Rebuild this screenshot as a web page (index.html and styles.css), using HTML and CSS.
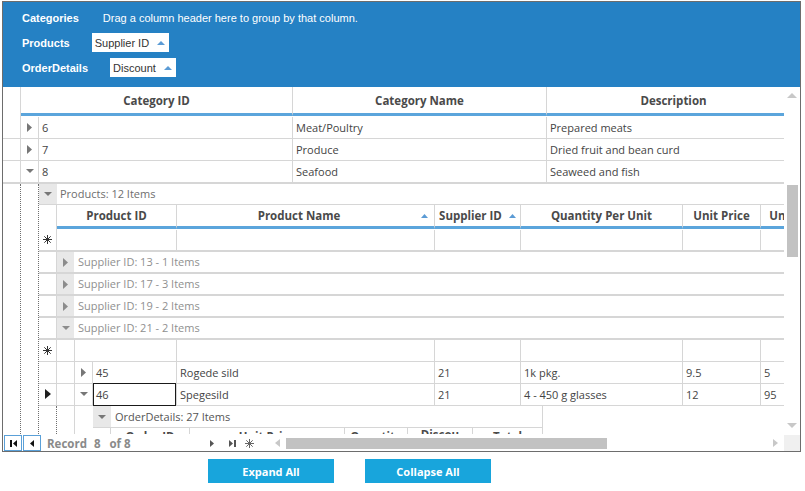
FILE: index.html
```html
<!DOCTYPE html>
<html>
<head>
<meta charset="utf-8">
<link rel="stylesheet" href="styles.css">
</head>
<body>
<div class="grid">
  <div class="group-panel">
    <div class="gp-row"><span class="gp-label">Categories</span><span class="gp-hint">Drag a column header here to group by that column.</span></div>
    <div class="gp-row"><span class="gp-label">Products</span><span class="gp-chip">Supplier ID<svg class="sort" width="8" height="4" viewBox="0 0 8 4"><path d="M0 4L4 0L8 4Z"/></svg></span></div>
    <div class="gp-row"><span class="gp-label">OrderDetails</span><span class="gp-chip">Discount<svg class="sort" width="8" height="4" viewBox="0 0 8 4"><path d="M0 4L4 0L8 4Z"/></svg></span></div>
  </div>

  <div class="main">
    <div class="content">
      <div class="hdr">
        <div class="c col-ind"></div>
        <div class="c hc col-catid-h">Category ID</div>
        <div class="c hc col-254">Category Name</div>
        <div class="c hc col-254">Description</div>
      </div>
      <div class="row">
        <div class="c col-ind"></div>
        <div class="c col-exp mid"><svg width="5" height="9" viewBox="0 0 5 9"><path class="tri" d="M0 0L5 4.5L0 9Z"/></svg></div>
        <div class="c col-254">6</div>
        <div class="c col-254">Meat/Poultry</div>
        <div class="c col-254">Prepared meats</div>
      </div>
      <div class="row">
        <div class="c col-ind"></div>
        <div class="c col-exp mid"><svg width="5" height="9" viewBox="0 0 5 9"><path class="tri" d="M0 0L5 4.5L0 9Z"/></svg></div>
        <div class="c col-254">7</div>
        <div class="c col-254">Produce</div>
        <div class="c col-254">Dried fruit and bean curd</div>
      </div>
      <div class="row row-last">
        <div class="c col-ind"></div>
        <div class="c col-exp mid"><svg width="8" height="4" viewBox="0 0 8 4"><path class="tri" d="M0 0H8L4 4Z"/></svg></div>
        <div class="c col-254">8</div>
        <div class="c col-254">Seafood</div>
        <div class="c col-254">Seaweed and fish</div>
      </div>

      <div class="detail">
        <div class="dots"></div>
        <div class="dots"></div>
        <div class="sub">
          <div class="band">
            <div class="band-btn"><svg width="8" height="4" viewBox="0 0 8 4"><path class="tri" d="M0 0H8L4 4Z"/></svg></div>
            <div class="band-text">Products: 12 Items</div>
          </div>
          <div class="hdr hdr-sub">
            <div class="c col-ind"></div>
            <div class="c hc col-120">Product ID</div>
            <div class="c hc col-258 sorted"><span class="hc-text">Product Name</span><svg class="sort" width="7" height="4" viewBox="0 0 7 4"><path d="M0 4L3.5 0L7 4Z"/></svg></div>
            <div class="c hc col-86 sorted-inline">Supplier ID<svg class="sort" width="7" height="4" viewBox="0 0 7 4"><path d="M0 4L3.5 0L7 4Z"/></svg></div>
            <div class="c hc col-162">Quantity Per Unit</div>
            <div class="c hc col-78">Unit Price</div>
            <div class="c hc col-97">Units In Stock</div>
          </div>
          <div class="row row-thick">
            <div class="c col-ind mid"><svg width="9" height="9" viewBox="0 0 9 9"><path class="star" d="M4.5 0V9M0 4.5H9M1.3 1.3L7.7 7.7M7.7 1.3L1.3 7.7"/></svg></div>
            <div class="c col-120"></div>
            <div class="c col-258"></div>
            <div class="c col-86"></div>
            <div class="c col-162"></div>
            <div class="c col-78"></div>
            <div class="c col-97"></div>
          </div>
          <div class="row grp">
            <div class="c col-ind"></div>
            <div class="gbtn"><svg width="5" height="9" viewBox="0 0 5 9"><path class="tri-light" d="M0 0L5 4.5L0 9Z"/></svg></div>
            <div class="gtext">Supplier ID: 13 - 1 Items</div>
          </div>
          <div class="row grp">
            <div class="c col-ind"></div>
            <div class="gbtn"><svg width="5" height="9" viewBox="0 0 5 9"><path class="tri-light" d="M0 0L5 4.5L0 9Z"/></svg></div>
            <div class="gtext">Supplier ID: 17 - 3 Items</div>
          </div>
          <div class="row grp">
            <div class="c col-ind"></div>
            <div class="gbtn"><svg width="5" height="9" viewBox="0 0 5 9"><path class="tri-light" d="M0 0L5 4.5L0 9Z"/></svg></div>
            <div class="gtext">Supplier ID: 19 - 2 Items</div>
          </div>
          <div class="row grp">
            <div class="c col-ind"></div>
            <div class="gbtn"><svg width="8" height="4" viewBox="0 0 8 4"><path class="tri-light" d="M0 0H8L4 4Z"/></svg></div>
            <div class="gtext">Supplier ID: 21 - 2 Items</div>
          </div>
          <div class="row">
            <div class="c col-ind mid"><svg width="9" height="9" viewBox="0 0 9 9"><path class="star" d="M4.5 0V9M0 4.5H9M1.3 1.3L7.7 7.7M7.7 1.3L1.3 7.7"/></svg></div>
            <div class="c col-18"></div>
            <div class="c col-102"></div>
            <div class="c col-258"></div>
            <div class="c col-86"></div>
            <div class="c col-162"></div>
            <div class="c col-78"></div>
            <div class="c col-97"></div>
          </div>
          <div class="row">
            <div class="c col-ind"></div>
            <div class="c col-18"></div>
            <div class="c col-18 mid"><svg width="5" height="9" viewBox="0 0 5 9"><path class="tri" d="M0 0L5 4.5L0 9Z"/></svg></div>
            <div class="c col-84">45</div>
            <div class="c col-258">Rogede sild</div>
            <div class="c col-86">21</div>
            <div class="c col-162">1k pkg.</div>
            <div class="c col-78">9.5</div>
            <div class="c col-97">5</div>
          </div>
          <div class="row">
            <div class="c col-ind mid"><svg width="6" height="10" viewBox="0 0 6 10"><path class="tri-cur" d="M0 0L6 5L0 10Z"/></svg></div>
            <div class="c col-18"></div>
            <div class="c col-18 mid"><svg width="8" height="4" viewBox="0 0 8 4"><path class="tri" d="M0 0H8L4 4Z"/></svg></div>
            <div class="c col-84 focus">46</div>
            <div class="c col-258">Spegesild</div>
            <div class="c col-86">21</div>
            <div class="c col-162">4 - 450 g glasses</div>
            <div class="c col-78">12</div>
            <div class="c col-97">95</div>
          </div>

          <div class="detail detail-od">
            <div class="dots"></div>
            <div class="indent-solid"></div>
            <div class="indent-blank"></div>
            <div class="sub sub-od">
              <div class="band band-od">
                <div class="band-btn"><svg width="8" height="4" viewBox="0 0 8 4"><path class="tri" d="M0 0H8L4 4Z"/></svg></div>
                <div class="band-text">OrderDetails: 27 Items</div>
              </div>
              <div class="hdr-od">
                <div class="c col-ind"></div>
                <div class="c ohc col-79">Order ID</div>
                <div class="c ohc col-155">Unit Price</div>
                <div class="c ohc col-63">Quantity</div>
                <div class="c ohc col-65 wrap"><span class="wrap-text">Discount</span></div>
                <div class="c ohc col-70">Total</div>
              </div>
            </div>
          </div>
        </div>
      </div>
    </div>

    <div class="vscroll">
      <svg class="vs-up" width="10" height="5" viewBox="0 0 10 5"><path class="sb-arrow" d="M0 5L5 0L10 5Z"/></svg>
      <div class="vs-thumb"></div>
      <svg class="vs-down" width="10" height="5" viewBox="0 0 10 5"><path class="sb-arrow" d="M0 0H10L5 5Z"/></svg>
    </div>
  </div>

  <div class="nav">
    <div class="navpart">
      <span class="nbtn"><svg width="7" height="7" viewBox="0 0 7 7"><path class="nav-dark" d="M0 0H2V7H0ZM7 0V7L3 3.5Z"/></svg></span>
      <span class="nbtn"><svg width="4" height="7" viewBox="0 0 4 7"><path class="nav-dark" d="M4 0V7L0 3.5Z"/></svg></span>
      <span class="rec rec-word">Record</span>
      <span class="rec rec-num">8</span>
      <span class="rec rec-of">of 8</span>
      <span class="nav-icons">
        <svg width="4" height="7" viewBox="0 0 4 7"><path class="nav-gray" d="M0 0L4 3.5L0 7Z"/></svg>
        <svg class="ni-last" width="7" height="7" viewBox="0 0 7 7"><path class="nav-gray" d="M0 0L4 3.5L0 7ZM5 0H7V7H5Z"/></svg>
        <svg class="ni-new" width="9" height="9" viewBox="0 0 9 9"><path class="star-gray" d="M4.5 0V9M0 4.5H9M1.3 1.3L7.7 7.7M7.7 1.3L1.3 7.7"/></svg>
      </span>
    </div>
    <div class="hscroll">
      <svg class="hs-left" width="5" height="8" viewBox="0 0 5 8"><path class="sb-arrow" d="M5 0V8L0 4Z"/></svg>
      <div class="hs-thumb"></div>
      <svg class="hs-right" width="5" height="8" viewBox="0 0 5 8"><path class="sb-arrow" d="M0 0L5 4L0 8Z"/></svg>
    </div>
    <div class="corner"></div>
  </div>
</div>

<div class="actions">
  <button class="btn">Expand All</button>
  <button class="btn">Collapse All</button>
</div>
</body>
</html>
```

FILE: styles.css
```css
* { box-sizing: border-box; }
html, body { margin: 0; background: #fff; }
body {
  font-family: "Open Sans", "Noto Sans", sans-serif;
  font-size: 11px;
  color: #444;
}

.grid {
  margin: 1px 0 0 2px;
  width: 799px;
  border: 1px solid #6d6d6d;
}

/* group-by panel */
.group-panel {
  height: 85px;
  background: #2581c4;
  padding: 3px 0 0 19px;
  font-family: "Liberation Sans", Arial, sans-serif;
  font-size: 11px;
  color: #fff;
}
.gp-row { height: 25px; display: flex; align-items: center; gap: 22px; }
.gp-label { font-weight: bold; }
.gp-hint { margin-left: 2px; }
.gp-chip {
  height: 19px;
  background: #fff;
  color: #333;
  display: flex;
  align-items: center;
  gap: 8px;
  padding: 0 4px 0 3px;
}
.sort { fill: #5b9bd5; flex: none; }

/* main grid area */
.main { height: 347px; display: flex; }
.content { width: 781px; flex: none; overflow: hidden; }

.hdr { display: flex; height: 30px; width: max-content; }
.row {
  display: flex;
  height: 22px;
  width: max-content;
  border-bottom: 1px solid #d6d6d6;
}
.row-last { height: 23px; border-bottom-width: 2px; }
.row-thick { border-bottom-width: 2px; }

.c {
  flex: none;
  height: 100%;
  border-right: 1px solid #d6d6d6;
  display: flex;
  align-items: center;
  padding: 0 0 1px 3px;
  white-space: nowrap;
  overflow: hidden;
}
.mid { justify-content: center; padding-left: 0; }

.hc {
  height: 29px;
  border-bottom: 3px solid #5ba5dc;
  justify-content: center;
  padding: 0;
  font-weight: 700;
  font-size: 11.5px;
  color: #4a4a4a;
}
.hdr-sub { height: 25px; }
.hdr-sub .hc { height: 24px; }

.sorted { padding-right: 6px; }
.sorted .hc-text { flex: 1; text-align: center; }
.sorted-inline { gap: 7px; }

.col-ind { width: 18px; }
.col-exp, .col-18 { width: 18px; }
.col-catid-h { width: 272px; }
.col-254 { width: 254px; }
.col-120 { width: 120px; }
.col-258 { width: 258px; }
.col-86 { width: 86px; }
.col-162 { width: 162px; }
.col-78 { width: 78px; }
.col-97 { width: 97px; }
.col-102 { width: 102px; }
.col-84 { width: 84px; }
.col-79 { width: 79px; }
.col-155 { width: 155px; }
.col-63 { width: 63px; }
.col-65 { width: 65px; }
.col-70 { width: 70px; }

.tri { fill: #777; }
.tri-light { fill: #8c8c8c; }
.tri-cur { fill: #1e1e1e; }
.star { stroke: #333; stroke-width: 1; fill: none; }

.focus { position: relative; overflow: visible; }
.focus::after {
  content: "";
  position: absolute;
  left: 0; right: 0; top: -1px; bottom: -1px;
  border: 1px solid #1a1a1a;
}

/* hierarchy */
.detail { display: flex; height: 250px; }
.dots { flex: none; width: 18px; height: 100%; border-right: 1px dotted #6f6f6f; }
.sub { flex: none; display: flex; flex-direction: column; }
.sub > * { flex: none; }

.band { display: flex; height: 21px; border-bottom: 1px solid #d6d6d6; }
.band-btn {
  flex: none;
  width: 18px;
  background: #e8e8e8;
  display: flex;
  align-items: center;
  justify-content: center;
}
.band-text { display: flex; align-items: center; padding: 0 0 1px 3px; color: #6e6e6e; white-space: nowrap; }

.grp { width: auto; border-bottom-width: 2px; }
.gbtn {
  flex: none;
  width: 17px;
  background: #e8e8e8;
  display: flex;
  align-items: center;
  justify-content: center;
}
.gtext { display: flex; align-items: center; padding: 0 0 1px 4px; color: #8f8f8f; white-space: nowrap; }

.detail-od { height: 40px; }
.indent-solid { flex: none; width: 18px; border-right: 1px solid #d6d6d6; }
.indent-blank { flex: none; width: 18px; }
.sub-od { width: 450px; border-right: 1px solid #d6d6d6; }
.band-od { height: 22px; }
.band-od .band-text { padding-left: 4px; color: #555; }
.hdr-od { display: flex; height: 34px; }
.ohc {
  align-items: flex-start;
  justify-content: center;
  padding: 1px 0 0;
  font-weight: 700;
  font-size: 11.5px;
  color: #4a4a4a;
}
.wrap { padding-top: 0; }
.wrap-text { white-space: normal; word-break: break-all; width: 44px; line-height: 13px; text-align: center; }

/* vertical scrollbar */
.vscroll {
  flex: none;
  width: 16px;
  display: flex;
  flex-direction: column;
  align-items: center;
}
.sb-arrow { fill: #c8c8c8; }
.vs-up { margin-top: 6px; }
.vs-thumb { width: 11px; height: 72px; background: #c2c2c2; margin-top: 87px; margin-left: 1px; }
.vs-down { margin-top: auto; margin-bottom: 6px; }

/* navigator + horizontal scrollbar */
.nav { height: 17px; display: flex; }
.navpart { flex: none; width: 270px; display: flex; align-items: center; }
.nbtn {
  flex: none;
  width: 18px;
  height: 16px;
  margin: 1px 0 0 1px;
  border: 1px solid #5aa0d8;
  display: flex;
  align-items: center;
  justify-content: center;
}
.nav-dark { fill: #111; }
.nav-gray { fill: #555; }
.star-gray { stroke: #666; stroke-width: 1; fill: none; }
.rec { font-weight: 700; font-size: 11.5px; color: #8a8a8a; margin-top: 1px; }
.rec-word { margin-left: 6px; }
.rec-num { margin-left: 7px; }
.rec-of { margin-left: 9px; }
.nav-icons { margin-left: auto; margin-right: 19px; display: flex; align-items: center; margin-top: 1px; }
.ni-last { margin-left: 15px; }
.ni-new { margin-left: 9px; }

.hscroll { flex: none; width: 511px; display: flex; align-items: center; padding-top: 1px; }
.hs-left { margin-left: 2px; }
.hs-thumb { width: 321px; height: 11px; background: #c2c2c2; margin-left: 6px; }
.hs-right { margin-left: auto; margin-right: 6px; }
.corner { flex: none; width: 16px; margin-top: 1px; background: #f0f0f0; }

/* buttons */
.actions { display: flex; gap: 31px; margin: 7px 0 0 208px; }
.btn {
  width: 126px;
  height: 24px;
  border: none;
  padding: 0;
  background: #18a5dc;
  color: #fff;
  font-family: "Open Sans", "Noto Sans", sans-serif;
  font-size: 11px;
  font-weight: 700;
}
```
